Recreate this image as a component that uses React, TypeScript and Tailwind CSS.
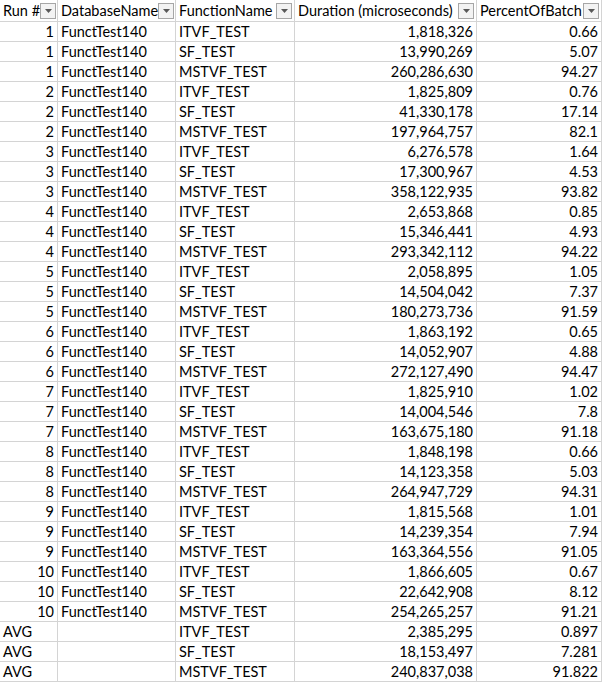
const rows: [string, string, string, string, string][] = [
  ['1', 'FunctTest140', 'ITVF_TEST', '1,818,326', '0.66'],
  ['1', 'FunctTest140', 'SF_TEST', '13,990,269', '5.07'],
  ['1', 'FunctTest140', 'MSTVF_TEST', '260,286,630', '94.27'],
  ['2', 'FunctTest140', 'ITVF_TEST', '1,825,809', '0.76'],
  ['2', 'FunctTest140', 'SF_TEST', '41,330,178', '17.14'],
  ['2', 'FunctTest140', 'MSTVF_TEST', '197,964,757', '82.1'],
  ['3', 'FunctTest140', 'ITVF_TEST', '6,276,578', '1.64'],
  ['3', 'FunctTest140', 'SF_TEST', '17,300,967', '4.53'],
  ['3', 'FunctTest140', 'MSTVF_TEST', '358,122,935', '93.82'],
  ['4', 'FunctTest140', 'ITVF_TEST', '2,653,868', '0.85'],
  ['4', 'FunctTest140', 'SF_TEST', '15,346,441', '4.93'],
  ['4', 'FunctTest140', 'MSTVF_TEST', '293,342,112', '94.22'],
  ['5', 'FunctTest140', 'ITVF_TEST', '2,058,895', '1.05'],
  ['5', 'FunctTest140', 'SF_TEST', '14,504,042', '7.37'],
  ['5', 'FunctTest140', 'MSTVF_TEST', '180,273,736', '91.59'],
  ['6', 'FunctTest140', 'ITVF_TEST', '1,863,192', '0.65'],
  ['6', 'FunctTest140', 'SF_TEST', '14,052,907', '4.88'],
  ['6', 'FunctTest140', 'MSTVF_TEST', '272,127,490', '94.47'],
  ['7', 'FunctTest140', 'ITVF_TEST', '1,825,910', '1.02'],
  ['7', 'FunctTest140', 'SF_TEST', '14,004,546', '7.8'],
  ['7', 'FunctTest140', 'MSTVF_TEST', '163,675,180', '91.18'],
  ['8', 'FunctTest140', 'ITVF_TEST', '1,848,198', '0.66'],
  ['8', 'FunctTest140', 'SF_TEST', '14,123,358', '5.03'],
  ['8', 'FunctTest140', 'MSTVF_TEST', '264,947,729', '94.31'],
  ['9', 'FunctTest140', 'ITVF_TEST', '1,815,568', '1.01'],
  ['9', 'FunctTest140', 'SF_TEST', '14,239,354', '7.94'],
  ['9', 'FunctTest140', 'MSTVF_TEST', '163,364,556', '91.05'],
  ['10', 'FunctTest140', 'ITVF_TEST', '1,866,605', '0.67'],
  ['10', 'FunctTest140', 'SF_TEST', '22,642,908', '8.12'],
  ['10', 'FunctTest140', 'MSTVF_TEST', '254,265,257', '91.21'],
  ['AVG', '', 'ITVF_TEST', '2,385,295', '0.897'],
  ['AVG', '', 'SF_TEST', '18,153,497', '7.281'],
  ['AVG', '', 'MSTVF_TEST', '240,837,038', '91.822'],
];

const cols = 'grid grid-cols-[58px_118px_119px_182px_125px]';
const cell = 'h-5 border-r border-b border-[#d4d4d4] px-[3px] leading-5 whitespace-nowrap overflow-hidden';

function Filter() {
  return (
    <span className="ml-auto flex h-[16px] w-[16px] shrink-0 items-center justify-center border border-[#a6a6a6] bg-[#f3f3f3]">
      <svg width="7" height="4" viewBox="0 0 7 4"><path d="M0 0h7L3.5 4z" fill="#595959" /></svg>
    </span>
  );
}

export default function App() {
  const headers = ['Run #', 'DatabaseName', 'FunctionName', 'Duration (microseconds)', 'PercentOfBatch'];
  return (
    <div className="h-[685px] w-[604px] overflow-hidden bg-white text-[14.5px] text-black" style={{ fontFamily: 'Lato, "Open Sans", sans-serif' }}>
      <div className={cols}>
        {headers.map((h) => (
          <div key={h} className="flex h-[22px] items-center border-r border-b border-[#d4d4d4] pl-[3px] pr-[2px] whitespace-nowrap">
            <span>{h}</span>
            <Filter />
          </div>
        ))}
      </div>
      {rows.map((r, i) => (
        <div key={i} className={cols}>
          <div className={`${cell} ${r[0] === 'AVG' ? 'text-left' : 'text-right'}`}>{r[0]}</div>
          <div className={cell}>{r[1]}</div>
          <div className={cell}>{r[2]}</div>
          <div className={`${cell} text-right`}>{r[3]}</div>
          <div className={`${cell} text-right`}>{r[4]}</div>
        </div>
      ))}
    </div>
  );
}
